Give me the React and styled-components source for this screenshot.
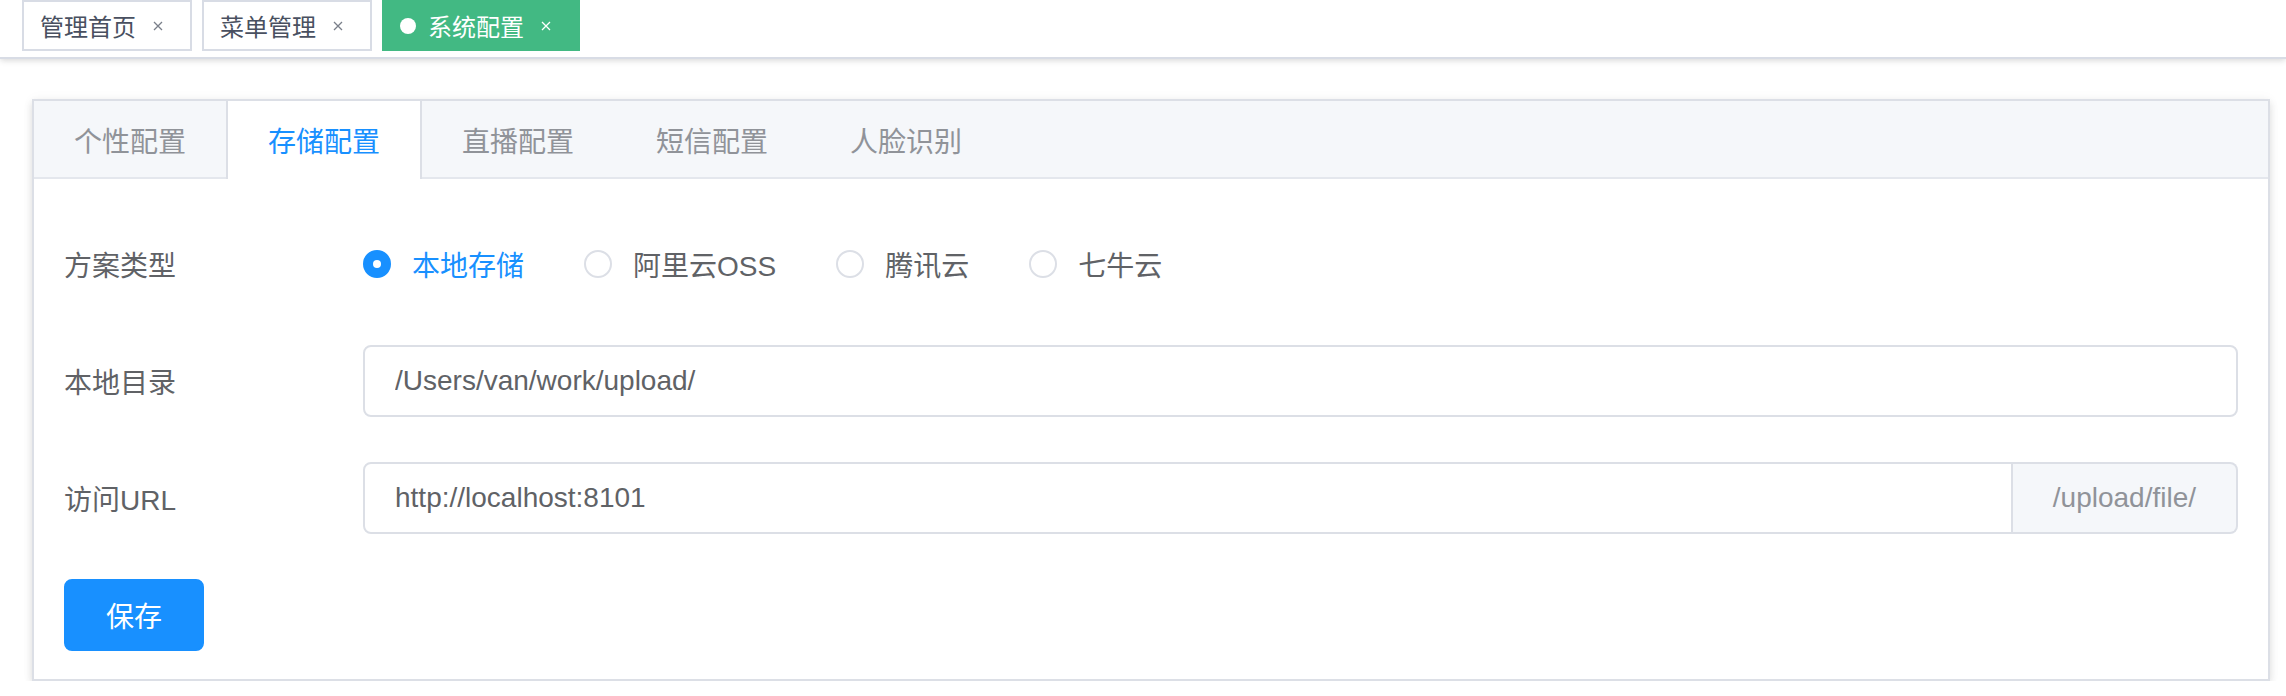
import React from 'react';
import styled, { createGlobalStyle } from 'styled-components';

const GlobalStyle = createGlobalStyle`
  html, body {
    margin: 0;
    padding: 0;
    background: #fff;
  }
  body {
    font-family: "Liberation Sans", "Noto Sans CJK SC", sans-serif;
  }
  * {
    box-sizing: border-box;
  }
`;

const TagsBar = styled.div`
  height: 59px;
  display: flex;
  align-items: flex-start;
  gap: 10px;
  padding-left: 22px;
  background: #fff;
  border-bottom: 2px solid #d8dce5;
  box-shadow: 0 2px 6px 0 rgba(0, 0, 0, 0.12), 0 0 6px 0 rgba(0, 0, 0, 0.04);
`;

const Tag = styled.div`
  height: 51px;
  display: inline-flex;
  align-items: center;
  padding: 0 16px;
  font-size: 24px;
  color: ${(p) => (p.$active ? '#fff' : '#495060')};
  background: ${(p) => (p.$active ? '#42b983' : '#fff')};
  border: 2px solid ${(p) => (p.$active ? '#42b983' : '#d8dce5')};
`;

const Dot = styled.span`
  width: 16px;
  height: 16px;
  border-radius: 50%;
  background: #fff;
  margin-right: 12px;
`;

const Close = styled.span`
  width: 32px;
  height: 32px;
  margin-left: 6px;
  display: inline-flex;
  align-items: center;
  justify-content: center;
  color: ${(p) => (p.$active ? '#fff' : '#7a7f8a')};
`;

const Main = styled.div`
  padding: 40px 16px 0 32px;
`;

const Card = styled.div`
  border: 2px solid #dcdfe6;
  background: #fff;
  box-shadow: 0 4px 8px 0 rgba(0, 0, 0, 0.12), 0 0 12px 0 rgba(0, 0, 0, 0.04);
`;

const TabHeader = styled.div`
  display: flex;
  height: 78px;
  background: #f5f7fa;
  border-bottom: 2px solid #e4e7ed;
`;

const Tab = styled.div`
  height: 78px;
  margin-left: -2px;
  margin-bottom: -2px;
  padding: 0 40px;
  display: flex;
  align-items: center;
  font-size: 28px;
  color: ${(p) => (p.$active ? '#1890ff' : '#909399')};
  background: ${(p) => (p.$active ? '#fff' : 'transparent')};
  border-left: 2px solid ${(p) => (p.$active ? '#dcdfe6' : 'transparent')};
  border-right: 2px solid ${(p) => (p.$active ? '#dcdfe6' : 'transparent')};
`;

const Content = styled.div`
  padding: 49px 30px 28px 30px;
`;

const FormItem = styled.div`
  display: flex;
  align-items: center;
  height: 72px;
  margin-bottom: 45px;
  &:last-child {
    margin-bottom: 0;
  }
`;

const Label = styled.label`
  width: 299px;
  flex-shrink: 0;
  font-size: 28px;
  color: #606266;
`;

const RadioGroup = styled.div`
  display: flex;
  align-items: center;
  gap: 60px;
`;

const Radio = styled.label`
  display: inline-flex;
  align-items: center;
  font-size: 28px;
  color: ${(p) => (p.$checked ? '#1890ff' : '#606266')};
`;

const RadioCircle = styled.span`
  width: 28px;
  height: 28px;
  border-radius: 50%;
  border: 2px solid ${(p) => (p.$checked ? '#1890ff' : '#dcdfe6')};
  background: ${(p) => (p.$checked ? '#1890ff' : '#fff')};
  display: inline-flex;
  align-items: center;
  justify-content: center;
  margin-right: 21px;
  &::after {
    content: '';
    width: 8px;
    height: 8px;
    border-radius: 50%;
    background: #fff;
    display: ${(p) => (p.$checked ? 'block' : 'none')};
  }
`;

const InputGroup = styled.div`
  flex: 1;
  display: flex;
  height: 72px;
`;

const Input = styled.input`
  flex: 1;
  min-width: 0;
  height: 72px;
  padding: 0 30px;
  font-family: inherit;
  font-size: 28px;
  color: #606266;
  border: 2px solid #dcdfe6;
  border-radius: ${(p) => (p.$grouped ? '8px 0 0 8px' : '8px')};
  outline: none;
  background: #fff;
`;

const Append = styled.div`
  display: flex;
  align-items: center;
  padding: 0 40px;
  font-size: 28px;
  color: #909399;
  background: #f5f7fa;
  border: 2px solid #dcdfe6;
  border-left: 0;
  border-radius: 0 8px 8px 0;
`;

const Button = styled.button`
  height: 72px;
  padding: 0 40px;
  font-family: inherit;
  font-size: 28px;
  color: #fff;
  background: #1890ff;
  border: 2px solid #1890ff;
  border-radius: 8px;
`;

const CloseIcon = () => (
  <svg width="10" height="10" viewBox="0 0 10 10">
    <path d="M1 1 L9 9 M9 1 L1 9" stroke="currentColor" strokeWidth="1.3" fill="none" />
  </svg>
);

const tags = [
  { name: '管理首页' },
  { name: '菜单管理' },
  { name: '系统配置', active: true },
];

const tabs = ['个性配置', '存储配置', '直播配置', '短信配置', '人脸识别'];

const radios = ['本地存储', '阿里云OSS', '腾讯云', '七牛云'];

export default function App() {
  return (
    <>
      <GlobalStyle />
      <TagsBar>
        {tags.map((t) => (
          <Tag key={t.name} $active={t.active}>
            {t.active && <Dot />}
            {t.name}
            <Close $active={t.active}>
              <CloseIcon />
            </Close>
          </Tag>
        ))}
      </TagsBar>
      <Main>
        <Card>
          <TabHeader>
            {tabs.map((t) => (
              <Tab key={t} $active={t === '存储配置'}>
                {t}
              </Tab>
            ))}
          </TabHeader>
          <Content>
            <FormItem>
              <Label>方案类型</Label>
              <RadioGroup>
                {radios.map((r, i) => (
                  <Radio key={r} $checked={i === 0}>
                    <RadioCircle $checked={i === 0} />
                    {r}
                  </Radio>
                ))}
              </RadioGroup>
            </FormItem>
            <FormItem>
              <Label>本地目录</Label>
              <InputGroup>
                <Input readOnly value="/Users/van/work/upload/" />
              </InputGroup>
            </FormItem>
            <FormItem>
              <Label>访问URL</Label>
              <InputGroup>
                <Input $grouped readOnly value="http://localhost:8101" />
                <Append>/upload/file/</Append>
              </InputGroup>
            </FormItem>
            <FormItem>
              <Button>保存</Button>
            </FormItem>
          </Content>
        </Card>
      </Main>
    </>
  );
}
